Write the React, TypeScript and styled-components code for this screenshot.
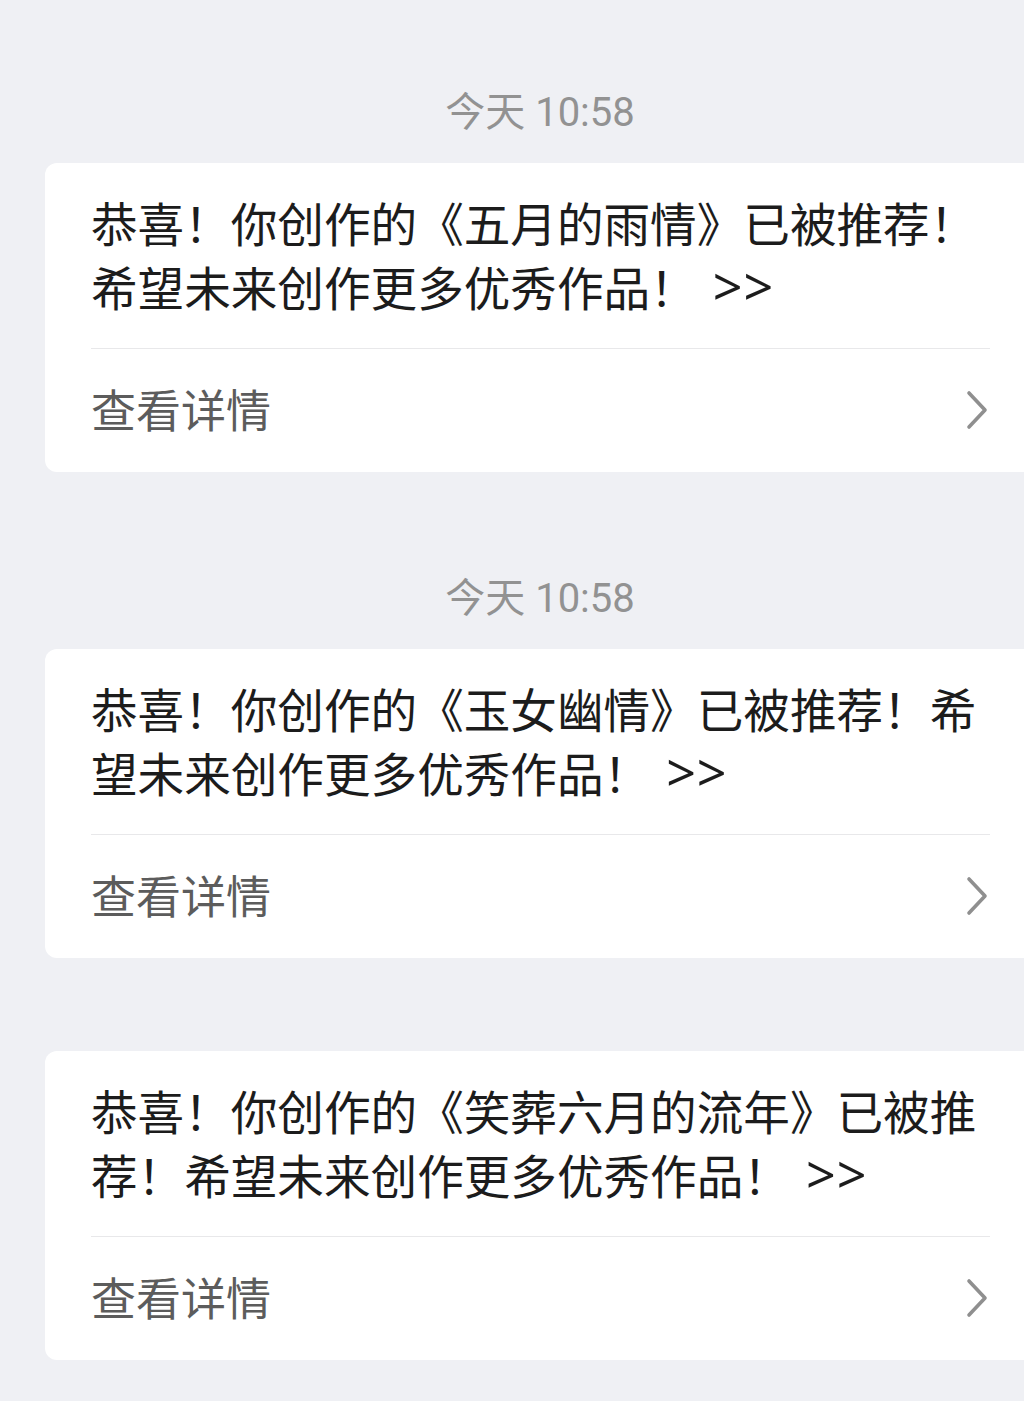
import React from "react";
import styled, { createGlobalStyle } from "styled-components";

const GlobalStyle = createGlobalStyle`
  html, body {
    margin: 0;
    padding: 0;
    background: #eff0f4;
    overflow-x: hidden;
  }
  body {
    font-family: Roboto, "Noto Sans CJK SC", sans-serif;
  }
`;

const Page = styled.div`
  min-height: 1401px;
  background: #eff0f4;
  padding-left: 45px;
  padding-top: 87px;
  box-sizing: border-box;
`;

const List = styled.div`
  width: 990px;
  display: flex;
  flex-direction: column;
`;

const Group = styled.section<{ $top: number }>`
  display: flex;
  flex-direction: column;
  margin-top: ${(p) => p.$top}px;
`;

const Time = styled.div`
  text-align: center;
  font-size: 40px;
  line-height: 52px;
  color: #929292;
  margin-bottom: 24px;
`;

const Card = styled.div`
  background: #ffffff;
  border-radius: 12px;
  padding: 0 45px 0 46px;
  display: flex;
  flex-direction: column;
`;

const Message = styled.p`
  margin: 0;
  padding: 27px 0 30px;
  height: 128px;
  font-family: "Noto Sans CJK SC", sans-serif;
  font-size: 46.6px;
  line-height: 64px;
  color: #1c1c1c;
  border-bottom: 1.5px solid #e8e8ea;
  word-break: break-all;
  line-break: anywhere;
`;

const More = styled.span`
  font-family: "Noto Sans", "Noto Sans CJK SC", sans-serif;
  font-size: 52px;
  line-height: 0;
  margin-left: 16px;
  letter-spacing: 1px;
`;

const Footer = styled.div`
  height: 123px;
  display: flex;
  align-items: center;
  justify-content: space-between;
`;

const FooterLabel = styled.span`
  font-family: "Noto Sans CJK SC", sans-serif;
  font-size: 45px;
  color: #5c5c5c;
  margin-top: -4px;
`;

const Chevron = () => (
  <svg width="28" height="42" viewBox="0 0 28 42" style={{ marginRight: -2, marginTop: -2 }}>
    <path d="M5 4 L21 21 L5 38" fill="none" stroke="#8f8f8f" strokeWidth="3.6" strokeLinecap="round" strokeLinejoin="round" />
  </svg>
);

const items = [
  { time: "今天 10:58", top: 0, text: "恭喜！你创作的《五月的雨情》已被推荐！希望未来创作更多优秀作品！" },
  { time: "今天 10:58", top: 101, text: "恭喜！你创作的《玉女幽情》已被推荐！希望未来创作更多优秀作品！" },
  { time: "", top: 93, text: "恭喜！你创作的《笑葬六月的流年》已被推荐！希望未来创作更多优秀作品！" },
];

export default function App() {
  return (
    <>
      <GlobalStyle />
      <Page>
        <List>
          {items.map((it, i) => (
            <Group key={i} $top={it.top}>
              {it.time && <Time>{it.time}</Time>}
              <Card>
                <Message>
                  {it.text}
                  <More>&gt;&gt;</More>
                </Message>
                <Footer>
                  <FooterLabel>查看详情</FooterLabel>
                  <Chevron />
                </Footer>
              </Card>
            </Group>
          ))}
        </List>
      </Page>
    </>
  );
}
